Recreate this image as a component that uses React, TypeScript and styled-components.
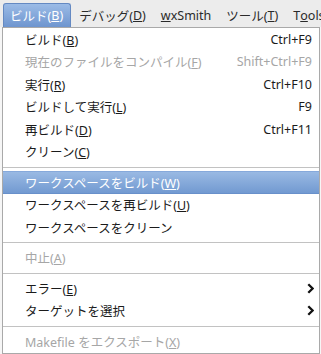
import React from "react";
import styled, { createGlobalStyle, css } from "styled-components";

const GlobalStyle = createGlobalStyle`
  html, body {
    margin: 0;
    padding: 0;
    background: #f6f6f6;
  }
  body {
    font-family: "Noto Sans", "Noto Sans CJK JP", sans-serif;
    font-size: 12.5px;
    -webkit-font-smoothing: antialiased;
  }
`;

const Page = styled.div`
  display: flex;
  flex-direction: column;
  width: 321px;
  height: 354px;
  overflow: hidden;
`;

const MenuBar = styled.div`
  display: flex;
  align-items: flex-end;
  height: 27px;
  padding-left: 3px;
  gap: 2px;
  background: #ececec;
  white-space: nowrap;
  box-sizing: border-box;
`;

const TopItem = styled.div<{ $active?: boolean }>`
  display: flex;
  align-items: center;
  height: 24px;
  padding: 0 7px 0 6px;
  box-sizing: border-box;
  color: #2a2a2a;
  border-radius: 3px 3px 0 0;
  ${(p) =>
    p.$active &&
    css`
      color: #ffffff;
      background: linear-gradient(#9bbbe6, #6e95cf);
      border: 1px solid #6489c2;
      border-bottom: none;
    `}
`;

const Dropdown = styled.div`
  display: flex;
  flex-direction: column;
  width: 318px;
  margin-left: 2px;
  border: 1px solid #a9a9a9;
  background: #ffffff;
  box-sizing: border-box;
`;

const Item = styled.div<{ $disabled?: boolean; $selected?: boolean }>`
  display: flex;
  align-items: center;
  height: 22.5px;
  padding: 0 7px 0 22px;
  color: ${(p) => (p.$disabled ? "#a6a6a6" : "#1b1b1b")};
  white-space: nowrap;
  ${(p) =>
    p.$selected &&
    css`
      color: #ffffff;
      background: linear-gradient(#9bbbe4, #7098d0);
      box-shadow: inset 0 1px 0 #86a9db, inset 0 -1px 0 #6890ca;
    `}
`;

const Label = styled.span`
  flex: 1;
`;

const Shortcut = styled.span`
  margin-left: 16px;
`;

const Arrow = styled.svg`
  width: 7px;
  height: 11px;
  margin-right: -2px;
`;

const Separator = styled.div`
  display: flex;
  align-items: center;
  height: 8px;
  &::after {
    content: "";
    flex: 1;
    height: 1px;
    background: #c2c2c2;
  }
`;

const U = styled.span`
  text-decoration: underline;
  text-underline-offset: 1px;
`;

const ChevronRight = () => (
  <Arrow viewBox="0 0 7 11">
    <polyline points="1.3,1.3 5.6,5.5 1.3,9.7" fill="none" stroke="#111" strokeWidth="2.3" />
  </Arrow>
);

type Entry =
  | { kind: "sep" }
  | {
      kind: "item";
      pre: string;
      key?: string;
      post?: string;
      shortcut?: string;
      disabled?: boolean;
      selected?: boolean;
      submenu?: boolean;
    };

const entries: Entry[] = [
  { kind: "item", pre: "ビルド(", key: "B", post: ")", shortcut: "Ctrl+F9" },
  { kind: "item", pre: "現在のファイルをコンパイル(", key: "F", post: ")", shortcut: "Shift+Ctrl+F9", disabled: true },
  { kind: "item", pre: "実行(", key: "R", post: ")", shortcut: "Ctrl+F10" },
  { kind: "item", pre: "ビルドして実行(", key: "L", post: ")", shortcut: "F9" },
  { kind: "item", pre: "再ビルド(", key: "D", post: ")", shortcut: "Ctrl+F11" },
  { kind: "item", pre: "クリーン(", key: "C", post: ")" },
  { kind: "sep" },
  { kind: "item", pre: "ワークスペースをビルド(", key: "W", post: ")", selected: true },
  { kind: "item", pre: "ワークスペースを再ビルド(", key: "U", post: ")" },
  { kind: "item", pre: "ワークスペースをクリーン" },
  { kind: "sep" },
  { kind: "item", pre: "中止(", key: "A", post: ")", disabled: true },
  { kind: "sep" },
  { kind: "item", pre: "エラー(", key: "E", post: ")", submenu: true },
  { kind: "item", pre: "ターゲットを選択", submenu: true },
  { kind: "sep" },
  { kind: "item", pre: "Makefile をエクスポート(", key: "X", post: ")", disabled: true },
];

export default function App() {
  return (
    <Page>
      <GlobalStyle />
      <MenuBar>
        <TopItem $active>
          ビルド(<U>B</U>)
        </TopItem>
        <TopItem>
          デバッグ(<U>D</U>)
        </TopItem>
        <TopItem>
          <U>w</U>xSmith
        </TopItem>
        <TopItem>
          ツール(<U>T</U>)
        </TopItem>
        <TopItem>
          T<U>o</U>ols
        </TopItem>
      </MenuBar>
      <Dropdown>
        {entries.map((e, i) =>
          e.kind === "sep" ? (
            <Separator key={i} />
          ) : (
            <Item key={i} $disabled={e.disabled} $selected={e.selected}>
              <Label>
                {e.pre}
                {e.key && <U>{e.key}</U>}
                {e.post}
              </Label>
              {e.shortcut && <Shortcut>{e.shortcut}</Shortcut>}
              {e.submenu && <ChevronRight />}
            </Item>
          )
        )}
      </Dropdown>
    </Page>
  );
}
